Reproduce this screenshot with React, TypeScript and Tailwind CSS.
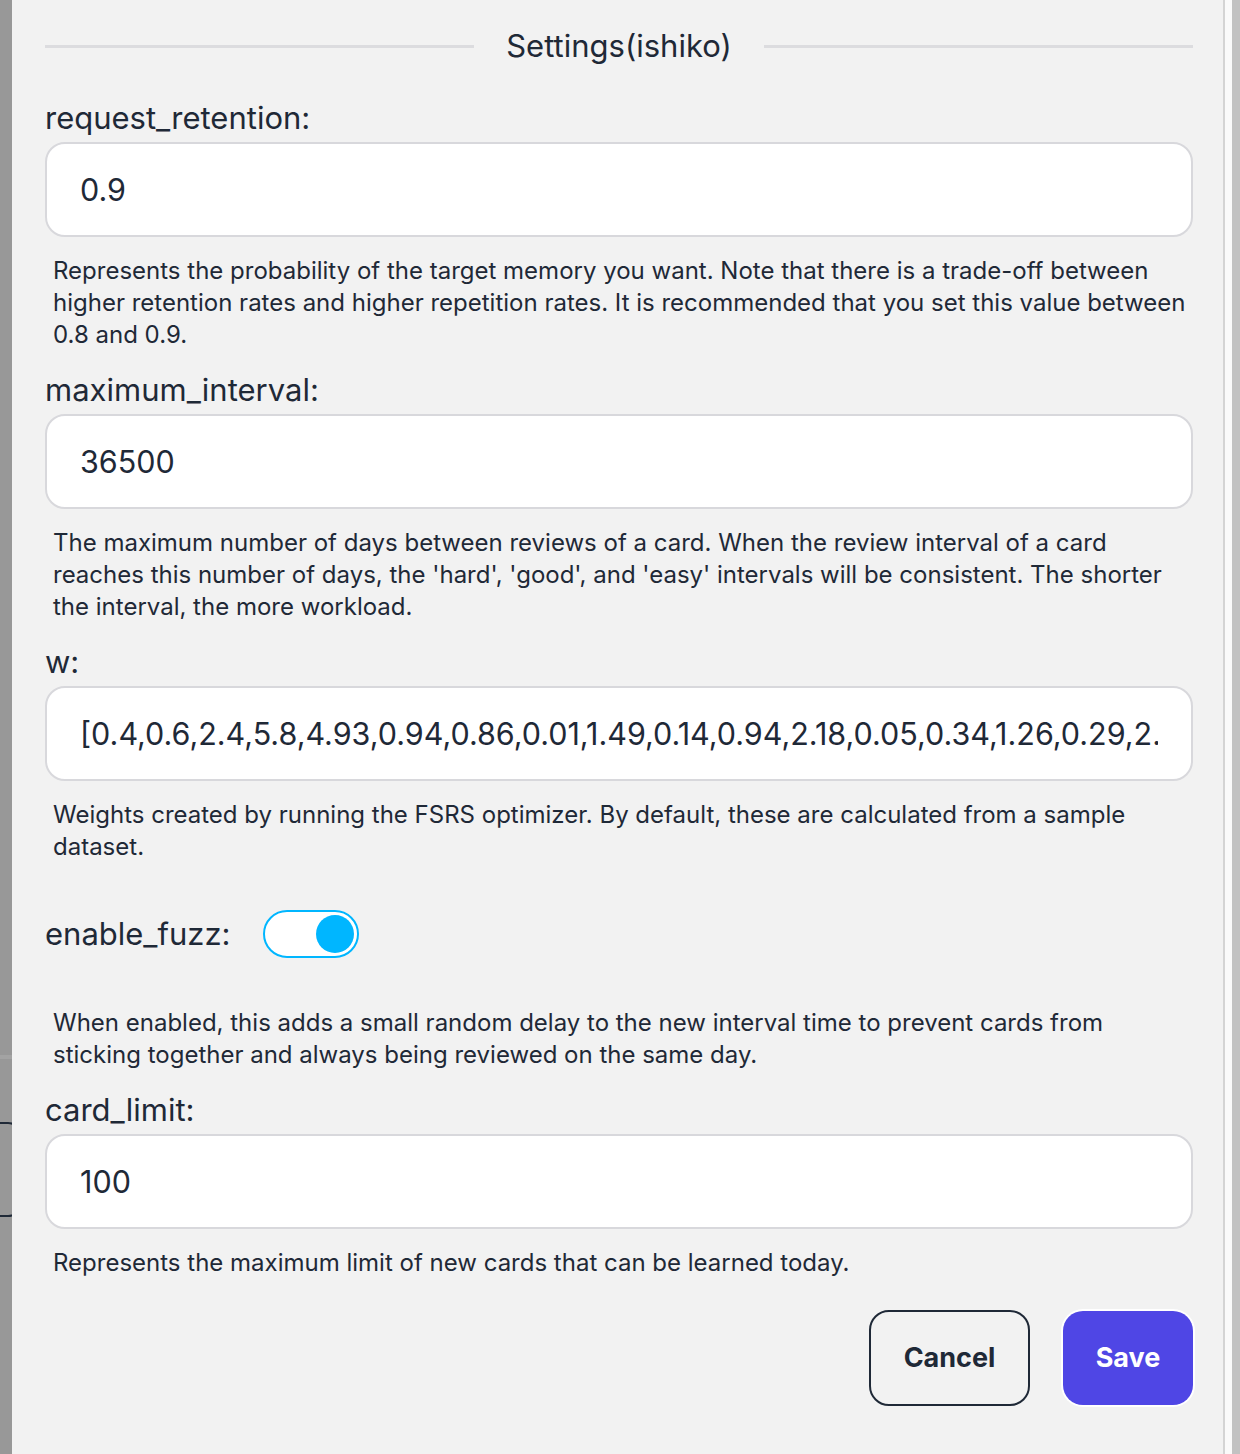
import React from 'react';

const fields = [
    {
        label: 'request_retention:',
        value: '0.9',
        hint: 'Represents the probability of the target memory you want. Note that there is a trade-off between higher retention rates and higher repetition rates. It is recommended that you set this value between 0.8 and 0.9.',
    },
    {
        label: 'maximum_interval:',
        value: '36500',
        hint: "The maximum number of days between reviews of a card. When the review interval of a card reaches this number of days, the 'hard', 'good', and 'easy' intervals will be consistent. The shorter the interval, the more workload.",
    },
    {
        label: 'w:',
        value: '[0.4,0.6,2.4,5.8,4.93,0.94,0.86,0.01,1.49,0.14,0.94,2.18,0.05,0.34,1.26,0.29,2.61]',
        hint: 'Weights created by running the FSRS optimizer. By default, these are calculated from a sample dataset.',
    },
];

const Field = ({ label, value, hint }: { label: string; value: string; hint: string }) => (
    <div>
        <div className='text-[31px] leading-[48px] text-[#1f2937]'>{label}</div>
        <input
            readOnly
            value={value}
            className='block h-[95px] w-full rounded-[20px] border-2 border-[#d8d8dc] bg-white pl-[33px] pr-[33px] text-[30.5px] text-[#1f2937] outline-none'
        />
        <p className='mt-[18px] pl-2 text-[24px] leading-[32px] text-[#1f2937]'>{hint}</p>
    </div>
);

const App = () => {
    return (
        <div className='flex h-[1454px] w-[1240px] overflow-hidden bg-[#f2f2f2]' style={{ fontFamily: 'Inter, "Noto Sans", sans-serif' }}>
            <div className='relative w-[12px] shrink-0 overflow-hidden bg-[#989898]'>
                <div className='absolute left-0 top-[1055px] h-[4px] w-[12px] bg-[#a3a3a3]' />
                <div className='absolute left-[-40px] top-[1122px] h-[95px] w-[62px] rounded-[14px] border-2 border-[#1f2937]' />
            </div>

            <div className='w-[1213px] shrink-0 border-r-2 border-[#d4d4d4] pl-[33px] pr-[30px] pt-[22px]'>
                <div className='flex items-center gap-[32px] h-[48px]'>
                    <div className='h-[3px] flex-1 bg-[#dcdcdf]' />
                    <span className='text-[31px] text-[#1f2937]'>Settings(ishiko)</span>
                    <div className='h-[3px] flex-1 bg-[#dcdcdf]' />
                </div>

                <div className='mt-[24px] flex flex-col gap-[15px]'>
                    {fields.map((f) => (
                        <Field key={f.label} {...f} />
                    ))}
                </div>

                <div className='mt-[47px] flex items-center h-[48px]'>
                    <span className='text-[31px] text-[#1f2937]'>enable_fuzz:</span>
                    <div className='ml-[33px] h-[48px] w-[96px] rounded-full border-2 border-[#00b6ff] bg-white flex items-center justify-end pr-[3px]'>
                        <div className='h-[38px] w-[38px] rounded-full bg-[#00b6ff]' />
                    </div>
                </div>
                <p className='mt-[49px] pl-2 text-[24px] leading-[32px] text-[#1f2937]'>
                    When enabled, this adds a small random delay to the new interval time to prevent cards from sticking together and always being reviewed on the same day.
                </p>

                <div className='mt-[15px]'>
                    <Field
                        label='card_limit:'
                        value='100'
                        hint='Represents the maximum limit of new cards that can be learned today.'
                    />
                </div>

                <div className='mt-[31px] flex justify-end gap-[33px]'>
                    <button className='h-[96px] w-[161px] rounded-[20px] border-2 border-[#1f2937] text-[27px] font-bold text-[#1f2937]'>
                        Cancel
                    </button>
                    <button className='h-[94px] w-[130px] mt-[1px] rounded-[20px] bg-[#4f46e5] text-[27px] font-bold text-white shadow-[0_0_0_2px_#ffffff]'>
                        Save
                    </button>
                </div>
            </div>

            <div className='w-[7px] shrink-0 bg-[#fafafa]' />
            <div className='flex-1 bg-[#c2c2c2]' />
        </div>
    );
};

export default App;
